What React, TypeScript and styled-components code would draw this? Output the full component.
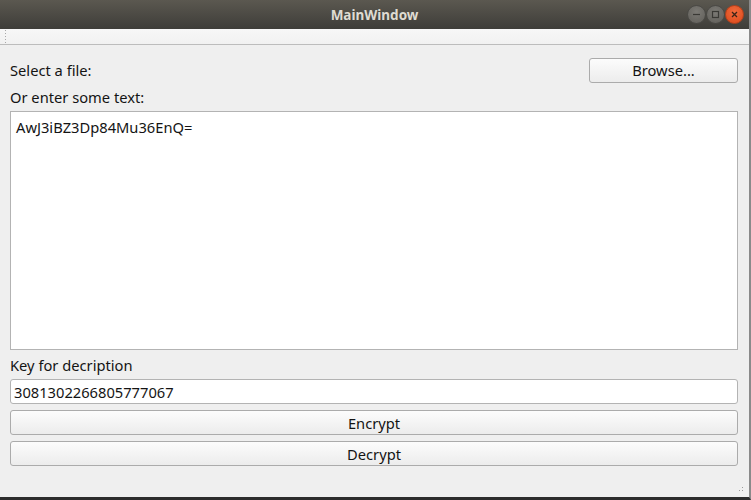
import React from "react";
import styled, { createGlobalStyle } from "styled-components";

const Global = createGlobalStyle`
  html, body { margin: 0; padding: 0; background: #2b2b2b; }
  #root { width: 751px; height: 500px; }
  * { box-sizing: border-box; }
`;

const Window = styled.div`
  width: 751px;
  height: 500px;
  display: flex;
  flex-direction: column;
  background: #efefef;
  font-family: "Noto Sans", "Open Sans", sans-serif;
  font-size: 14.7px;
  color: #141414;
  border-bottom: 3px solid #2c2c2c;
  border-right: 2px solid #8a8a8a;
  position: relative;
`;

const TitleBar = styled.div`
  height: 29px;
  flex: none;
  background: linear-gradient(#5b5850, #3e3d39);
  display: flex;
  align-items: center;
  justify-content: center;
  position: relative;
`;

const Title = styled.span`
  color: #dfdbd2;
  font-family: "Noto Sans", sans-serif;
  font-weight: 700;
  font-size: 13.5px;
`;

const Controls = styled.div`
  position: absolute;
  right: 5px;
  top: 5px;
  display: flex;
  gap: 0px;
`;

const Circle = styled.div<{ $close?: boolean }>`
  width: 19px;
  height: 19px;
  border-radius: 50%;
  background: ${(p) => (p.$close ? "radial-gradient(circle at 50% 35%, #f26b3c, #d9481a)" : "radial-gradient(circle at 50% 35%, #7c7a75, #5f5d58)")};
  border: 1px solid ${(p) => (p.$close ? "#b8401a" : "#4a4945")};
  display: flex;
  align-items: center;
  justify-content: center;
`;

const ToolStrip = styled.div`
  height: 16px;
  flex: none;
  background: linear-gradient(#f7f7f7, #f1f1f1);
  border-bottom: 1px solid #bcbcbc;
  display: flex;
  align-items: stretch;
  padding-left: 4px;
`;

const Handle = styled.div`
  width: 4px;
  background-image: radial-gradient(circle, #a8a8a8 0.8px, transparent 1px);
  background-size: 3px 3px;
`;

const Body = styled.div`
  flex: 1;
  display: flex;
  flex-direction: column;
  padding: 12px 11px 0 10px;
`;

const Row = styled.div`
  display: flex;
  align-items: center;
  justify-content: space-between;
  height: 26px;
`;

const Label = styled.div<{ $h?: number }>`
  height: ${(p) => p.$h ?? 26}px;
  display: flex;
  align-items: center;
`;

const Button = styled.button`
  height: 25px;
  border: 1px solid #ababab;
  border-radius: 3px;
  background: linear-gradient(#fcfcfc, #ececec);
  font-family: inherit;
  font-size: 14.7px;
  color: #141414;
  padding: 0;
  display: flex;
  align-items: center;
  justify-content: center;
`;

const BrowseButton = styled(Button)`
  width: 149px;
`;

const WideButton = styled(Button)`
  width: 100%;
  margin-top: 6px;
`;

const TextArea = styled.div`
  height: 239px;
  background: #fff;
  border: 1px solid #b3b3b3;
  padding: 5px 5px;
  line-height: 20px;
`;

const Input = styled.div`
  height: 25px;
  background: #fff;
  border: 1px solid #b3b3b3;
  border-radius: 3px;
  padding: 0 3px;
  display: flex;
  align-items: center;
`;

const Grip = styled.div`
  position: absolute;
  right: 4px;
  bottom: 4px;
  width: 10px;
  height: 10px;
  background-image: radial-gradient(circle, #9a9a9a 0.7px, transparent 1px);
  background-size: 3px 3px;
  clip-path: polygon(100% 0, 100% 100%, 0 100%);
`;

export default function App() {
  return (
    <>
      <Global />
      <Window>
        <TitleBar>
          <Title>MainWindow</Title>
          <Controls>
            <Circle>
              <svg width="9" height="9" viewBox="0 0 9 9">
                <line x1="1" y1="4.5" x2="8" y2="4.5" stroke="#3a3935" strokeWidth="1.2" />
              </svg>
            </Circle>
            <Circle>
              <svg width="9" height="9" viewBox="0 0 9 9">
                <rect x="1.5" y="1.5" width="6" height="6" fill="none" stroke="#3a3935" strokeWidth="1.2" />
              </svg>
            </Circle>
            <Circle $close>
              <svg width="9" height="9" viewBox="0 0 9 9">
                <path d="M2 2 L7 7 M7 2 L2 7" stroke="#3a2418" strokeWidth="1.3" />
              </svg>
            </Circle>
          </Controls>
        </TitleBar>
        <ToolStrip>
          <Handle />
        </ToolStrip>
        <Body>
          <Row>
            <span>Select a file:</span>
            <BrowseButton>Browse...</BrowseButton>
          </Row>
          <Label $h={28}>Or enter some text:</Label>
          <TextArea>AwJ3iBZ3Dp84Mu36EnQ=</TextArea>
          <Label $h={29}>Key for decription</Label>
          <Input>3081302266805777067</Input>
          <WideButton>Encrypt</WideButton>
          <WideButton>Decrypt</WideButton>
        </Body>
        <Grip />
      </Window>
    </>
  );
}
